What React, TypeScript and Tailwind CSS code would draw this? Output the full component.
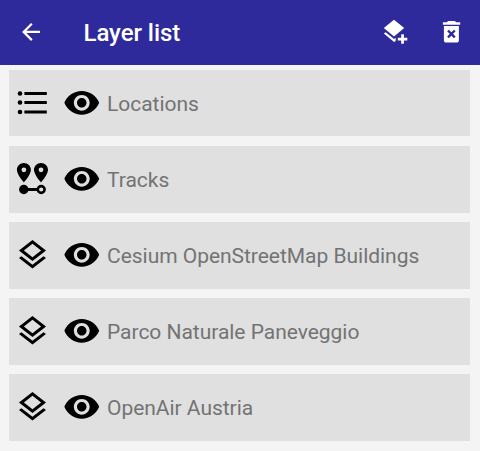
import type { ReactNode } from "react";

const ListIcon = () => (
  <svg className="h-9 w-9" viewBox="0 0 36 36">
    <circle cx="5" cy="8.5" r="2.3" />
    <circle cx="5" cy="17.5" r="2.3" />
    <circle cx="5" cy="27" r="2.3" />
    <path d="M9.4 7h22.4v3H9.4zM9.4 16h22.4v3H9.4zM9.4 25.4h22.4v3H9.4z" />
  </svg>
);

const pin =
  "M7 0C3.1 0 0 3.1 0 6.9c0 5.1 7 12.6 7 12.6s7-7.5 7-12.6C14 3.1 10.9 0 7 0zm0 9.3a2.4 2.4 0 1 1 0-4.8 2.4 2.4 0 0 1 0 4.8z";

const TracksIcon = () => (
  <svg className="h-9 w-9" viewBox="0 0 36 36">
    <path d={pin} transform="translate(1.9 1.9)" />
    <path d={pin} transform="translate(19 1.9)" />
    <circle cx="8.8" cy="28.5" r="4.7" />
    <path d="M9 27h14v3H9z" />
    <circle cx="26.2" cy="28.5" r="3.4" fill="none" stroke="black" strokeWidth="2.6" />
  </svg>
);

const LayersIcon = () => (
  <svg className="h-9 w-9" viewBox="0.35 0 24 24">
    <path d="M11.99 18.54l-7.37-5.73L3 14.07l9 7 9-7-1.63-1.27zM12 16l7.36-5.73L21 9l-9-7-9 7 1.63 1.27L12 16zm0-11.47L17.74 9 12 13.47 6.26 9 12 4.53z" />
  </svg>
);

const EyeIcon = () => (
  <svg className="block h-[38px] w-[38px]" viewBox="0.15 0.1 24 24">
    <path d="M12 4.5C7 4.5 2.73 7.61 1 12c1.73 4.39 6 7.5 11 7.5s9.27-3.11 11-7.5c-1.73-4.39-6-7.5-11-7.5zM12 17c-2.76 0-5-2.24-5-5s2.24-5 5-5 5 2.24 5 5-2.24 5-5 5zm0-8c-1.66 0-3 1.34-3 3s1.34 3 3 3 3-1.34 3-3-1.34-3-3-3z" />
  </svg>
);

const rows: { label: string; icon: ReactNode }[] = [
  { label: "Locations", icon: <ListIcon /> },
  { label: "Tracks", icon: <TracksIcon /> },
  { label: "Cesium OpenStreetMap Buildings", icon: <LayersIcon /> },
  { label: "Parco Naturale Paneveggio", icon: <LayersIcon /> },
  { label: "OpenAir Austria", icon: <LayersIcon /> },
];

export default function App() {
  return (
    <div className="flex h-[451px] w-[480px] flex-col overflow-hidden bg-[#f4f4f4] font-['Roboto',sans-serif]">
      <header className="flex h-[65px] shrink-0 items-center bg-[#2e2a9b] pl-[17.5px] pr-[15px] text-white">
        <button aria-label="Back">
          <svg
            className="mb-0.5 block h-[27px] w-[27px]"
            viewBox="0.4 -0.4 24 24"
            fill="currentColor"
          >
            <path d="M20 11H7.83l5.59-5.59L12 4l-8 8 8 8 1.41-1.41L7.83 13H20v-2z" />
          </svg>
        </button>
        <h1 className="ml-[39px] flex-1 whitespace-nowrap pt-px text-[24px] font-medium leading-7 tracking-[-0.05px]">
          Layer list
        </h1>
        <button aria-label="Add layer" className="mr-[29px]">
          <svg className="mb-0.5 block h-[27px] w-[27px]" viewBox="0 0 27 27" fill="currentColor">
            <path d="M12 1.8l10.2 8.3L12 18.5 1.8 10.1z" />
            <path d="M3.6 14.2l8.5 6.7 1.6-1.2v3.3l-1.6 1.1L1.8 15.6z" />
            <path d="M19.2 16.3h2.7v3.4h3.4v2.7h-3.4v3.4h-2.7v-3.4h-3.4v-2.7h3.4z" />
          </svg>
        </button>
        <button aria-label="Delete layers">
          <svg className="mb-0.5 block h-[27px] w-[27px]" viewBox="0 0 27 27" fill="currentColor">
            <path d="M10 3h7l1 1.2h4.2v2.6H4.9V4.2H9z" />
            <path d="M5.9 8h15v14.2c0 1.4-1 2.4-2.4 2.4H8.3c-1.4 0-2.4-1-2.4-2.4z" />
            <path d="M10 12.5l6.8 6.8m0-6.8L10 19.3" stroke="#2e2a9b" strokeWidth="2.4" />
          </svg>
        </button>
      </header>
      <ul className="flex flex-col gap-[9px] pl-[9px] pr-2.5 pt-[5px]">
        {rows.map(({ label, icon }) => (
          <li
            key={label}
            className="flex h-[67px] items-center bg-[#e0e0e0] pl-[5.5px] first:mb-px first:h-[66px]"
          >
            <span className="mb-px">{icon}</span>
            <span className="mb-px ml-3">
              <EyeIcon />
            </span>
            <span className="ml-[6.5px] whitespace-nowrap pt-px text-[21px] leading-7 tracking-[-0.03px] text-[#737373]">
              {label}
            </span>
          </li>
        ))}
      </ul>
    </div>
  );
}
